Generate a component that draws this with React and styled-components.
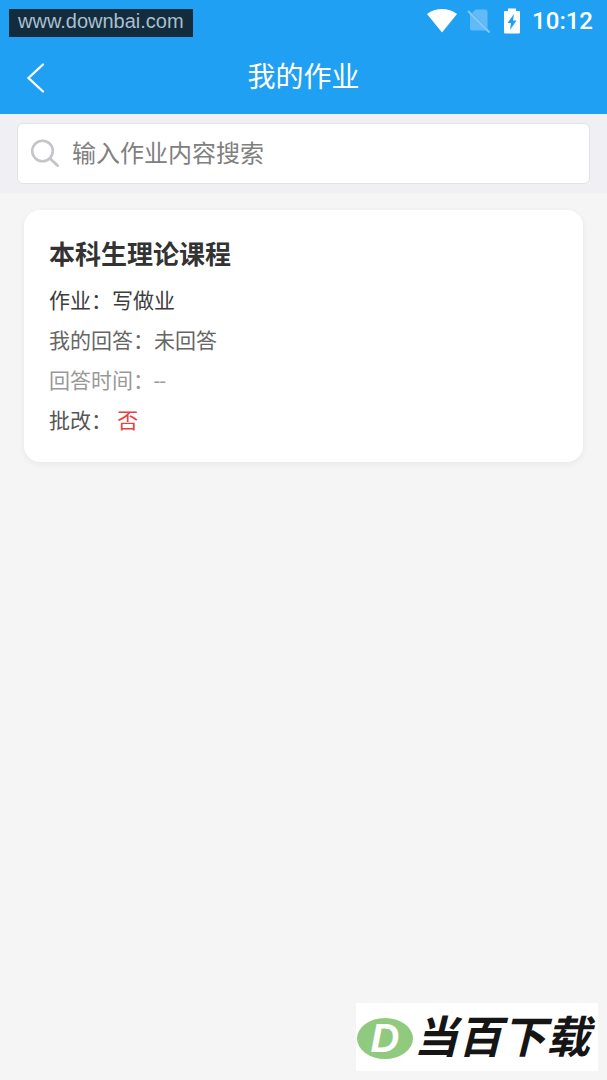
import styled, { createGlobalStyle } from "styled-components";
import { useState } from "react";

const homeworks = [
  {
    id: 1,
    course: "本科生理论课程",
    title: "写做业",
    answer: "未回答",
    time: "--",
    corrected: "否",
  },
];

export default function App() {
  const [search, setSearch] = useState("");

  return (
    <>
      <GlobalStyle />
      <Top>
        <StatusBar>
          <SiteTag>www.downbai.com</SiteTag>
          <WifiIcon />
          <NoSimIcon />
          <BatteryIcon />
          <Clock>10:12</Clock>
        </StatusBar>
        <NavBar>
          <BackButton type="button" aria-label="返回">
            <svg width="20" height="32" viewBox="0 0 20 32" fill="none">
              <path
                d="M17 2.5L2.5 16L17 29.5"
                stroke="#fff"
                strokeWidth="2.3"
                strokeLinecap="round"
              />
            </svg>
          </BackButton>
          <PageTitle>我的作业</PageTitle>
        </NavBar>
      </Top>

      <SearchBar>
        <SearchBox>
          <SearchIcon />
          <SearchInput
            type="text"
            aria-label="搜索"
            placeholder="输入作业内容搜索"
            value={search}
            onChange={(e) => setSearch(e.target.value)}
          />
        </SearchBox>
      </SearchBar>

      <List>
        {homeworks
          .filter((item) => item.title.includes(search))
          .map((item) => (
            <Card key={item.id}>
              <Course>{item.course}</Course>
              <Line color="#3c3c3c">作业：{item.title}</Line>
              <Line color="#666">我的回答：{item.answer}</Line>
              <Line color="#999">回答时间：{item.time}</Line>
              <Line color="#555">
                批改： <Result>{item.corrected}</Result>
              </Line>
            </Card>
          ))}
      </List>

      <Brand>
        <BrandBadge>D</BrandBadge>
        <BrandName>当百下载</BrandName>
      </Brand>
    </>
  );
}

function WifiIcon() {
  return (
    <svg width="30" height="26" viewBox="0 0 30 26">
      <path d="M0 6C8.5 -0.8 21.5 -0.8 30 6L15 24.5Z" fill="#fff" />
    </svg>
  );
}

function NoSimIcon() {
  return (
    <NoSim width="24" height="26" viewBox="0 0 24 26">
      <path
        d="M8.5 1.5H18.5Q20.5 1.5 20.5 3.5V21L5 5ZM3 5.5L19.5 22.5H5Q3 22.5 3 20.5Z"
        fill="#62baf6"
      />
      <path d="M1 3L22.5 24.5" stroke="#86caf9" strokeWidth="2" />
    </NoSim>
  );
}

function BatteryIcon() {
  return (
    <svg width="16" height="26" viewBox="0 0 16 26">
      <path
        d="M4 0.5H12V3H15Q16 3 16 4V24.5Q16 25.5 15 25.5H1Q0 25.5 0 24.5V4Q0 3 1 3H4Z"
        fill="#fff"
      />
      <path d="M10 6L3.5 15H7L6 22L12.5 12.5H9Z" fill="#1fa0f2" />
    </svg>
  );
}

function SearchIcon() {
  return (
    <svg width="30" height="30" viewBox="0 0 30 30" fill="none">
      <circle cx="11.5" cy="12" r="10.3" stroke="#c4c5c9" strokeWidth="2.6" />
      <path
        d="M19 19.5L26.5 26.5"
        stroke="#c4c5c9"
        strokeWidth="3"
        strokeLinecap="round"
      />
    </svg>
  );
}

const GlobalStyle = createGlobalStyle`
  * {
    box-sizing: border-box;
  }

  body {
    margin: 0;
    background-color: #f5f5f5;
    font-family: Roboto, "Noto Sans CJK SC", sans-serif;
  }
`;

const Top = styled.header`
  background-color: #1fa0f2;
  color: #fff;
`;

const StatusBar = styled.div`
  height: 42px;
  padding: 0 14px 0 9px;

  display: flex;
  align-items: center;
`;

const SiteTag = styled.span`
  height: 28px;
  margin-top: 4px;
  margin-right: auto;
  padding: 0 9px;

  background-color: #122c3e;
  color: #a9bfcc;
  font-family: "Liberation Sans", Arial, sans-serif;
  font-size: 20px;
  line-height: 24px;
`;

const NoSim = styled.svg`
  margin-left: 10px;
  margin-right: 13px;
`;

const Clock = styled.span`
  margin-left: 12px;

  font-size: 24px;
  font-weight: 500;
  line-height: 28px;
`;

const NavBar = styled.div`
  height: 72px;

  display: grid;
  grid-template-columns: 72px 1fr 72px;
  align-items: center;
`;

const BackButton = styled.button`
  height: 72px;
  padding: 0 0 0 26px;

  display: flex;
  align-items: center;

  border: none;
  background: none;
  cursor: pointer;
`;

const PageTitle = styled.h1`
  margin: 0;

  font-size: 28px;
  font-weight: 400;
  line-height: 40px;
  text-align: center;
`;

const SearchBar = styled.div`
  padding: 9px 17px;
  background-color: #efeff4;
`;

const SearchBox = styled.label`
  height: 61px;
  padding: 0 13px;

  display: flex;
  align-items: center;
  gap: 11px;

  background-color: #fff;
  border: 1px solid #e3e3e7;
  border-radius: 6px;
`;

const SearchInput = styled.input`
  flex: 1;
  min-width: 0;
  height: 40px;
  padding: 0;

  border: none;
  outline: none;
  background: none;
  color: #333;
  font-family: inherit;
  font-size: 24px;

  &::placeholder {
    color: #808080;
    opacity: 1;
  }
`;

const List = styled.main`
  padding: 17px 24px;
`;

const Card = styled.article`
  padding: 19px 25px 21px;

  background-color: #fff;
  border-radius: 16px;
  box-shadow: 0 2px 6px rgba(0, 0, 0, 0.06);
`;

const Course = styled.h2`
  margin: 0;

  color: #333;
  font-size: 26px;
  font-weight: 700;
  line-height: 52px;
`;

const Line = styled.p`
  margin: 0;

  color: ${(props) => props.color};
  font-size: 21px;
  line-height: 40px;
`;

const Result = styled.span`
  color: #e64340;
`;

const Brand = styled.div`
  position: fixed;
  right: 9px;
  bottom: 9px;
  height: 68px;
  padding: 2px 8px 0 1px;

  display: flex;
  align-items: center;
  gap: 1px;

  background-color: #fff;
  font-family: "Liberation Sans", "Noto Sans CJK SC", sans-serif;
  font-style: italic;
`;

const BrandBadge = styled.span`
  width: 56px;
  height: 41px;

  display: flex;
  align-items: center;
  justify-content: center;

  border-radius: 50%;
  background-color: #8fca7f;
  color: #fff;
  font-size: 40px;
  font-weight: 700;
`;

const BrandName = styled.span`
  color: #151515;
  font-size: 44px;
  font-weight: 700;
  line-height: 66px;
`;
